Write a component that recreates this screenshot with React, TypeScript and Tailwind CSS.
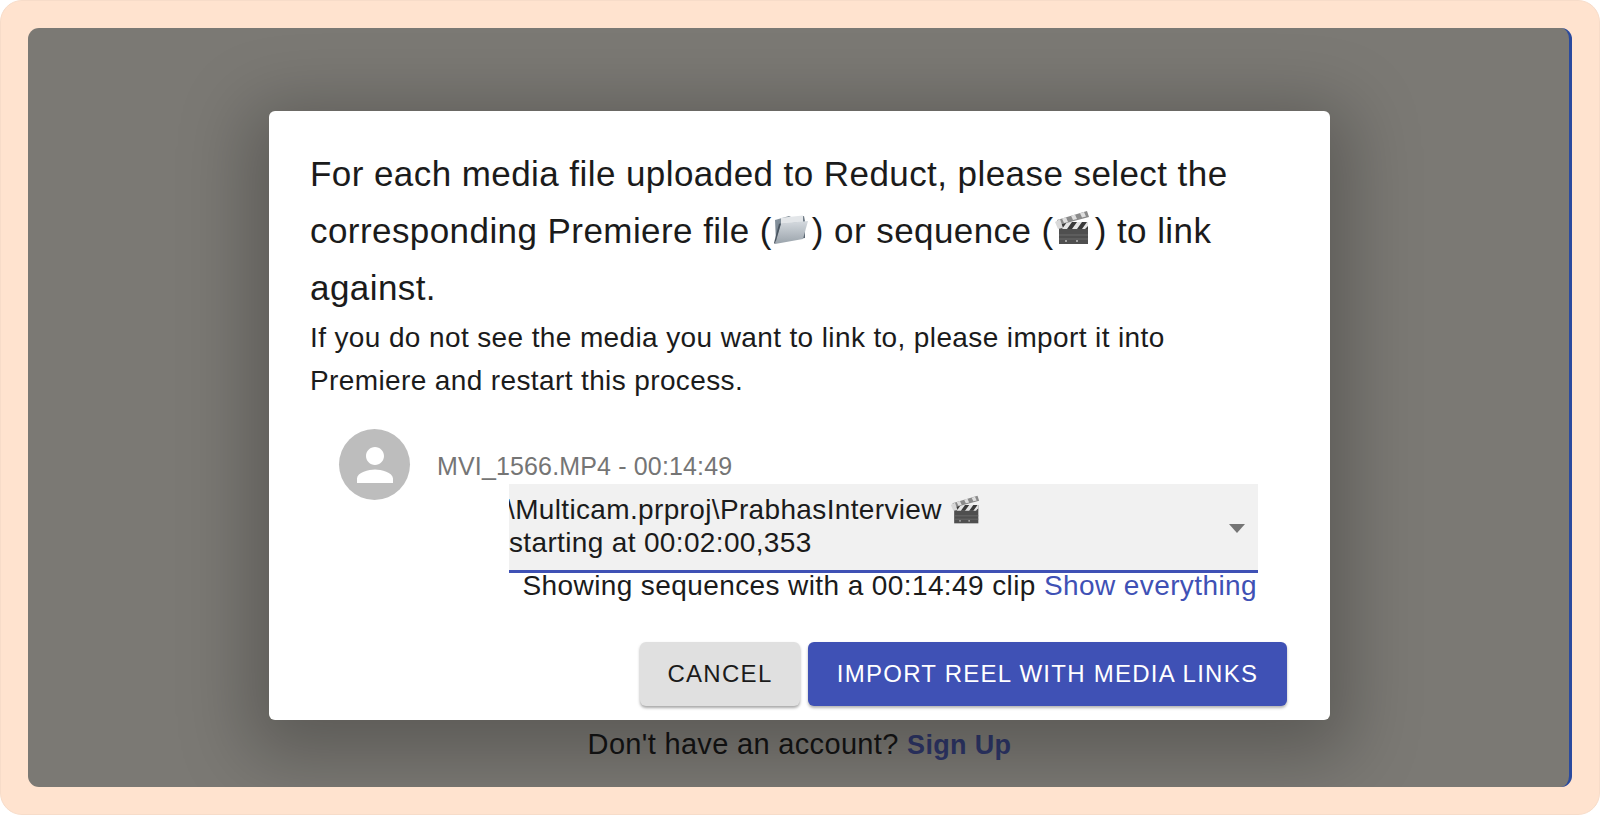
const Folder = () => (
  <svg viewBox="0 0 36 32" className="inline-block w-[36px] h-[32px] align-[-2px] ml-[0px] mr-[4px]">
    <defs>
      <linearGradient id="fa" x1="0" y1="0" x2="1" y2="1">
        <stop offset="0" stopColor="#8b98a3" />
        <stop offset="1" stopColor="#55606b" />
      </linearGradient>
      <linearGradient id="fb" x1="0" y1="0" x2="0" y2="1">
        <stop offset="0" stopColor="#d5dadf" />
        <stop offset="1" stopColor="#9aa3ab" />
      </linearGradient>
    </defs>
    <path d="M3 7 L17 3 L21 5 L32 3 L33 8 L33 25 L4 29 Z" fill="url(#fa)" />
    <path d="M9 4.8 L31 2.5 L31 9 L9 11 Z" fill="#e3e6e9" />
    <path d="M9 10.5 L36 8 L31 26 L3 31 Z" fill="url(#fb)" />
    <path d="M9 10.5 L3 31 L2 30 L7 10.8 Z" fill="#4a5560" />
  </svg>
);

const Clapper = ({ size = 36, cls = "align-[-6px]" }: { size?: number; cls?: string }) => (
  <svg viewBox="0 0 36 36" width={size} height={size} className={"inline-block " + cls}>
    <path d="M5 19 H34 V34 H5 Z" fill="#4f4f4f" />
    <path d="M5 25 H34 M5 29 H34" stroke="#6d6d6d" strokeWidth="1" />
    <path d="M11 31 H13 M22 31 H24" stroke="#bbb" strokeWidth="1.5" />
    <path d="M5 12 H34 V19 H5 Z" fill="#3a3a3a" />
    <path d="M8 19 L13 12 H18 L13 19 Z M18 19 L23 12 H28 L23 19 Z M28 19 L33 12 H34 V16 L31 19 Z" fill="#e4e4e4" />
    <path d="M3 10 L33 1 L35 7 L5 15 Z" fill="#8a8a8a" />
    <path d="M8 8.5 L12 7.3 L14 12 L10 13 Z M17 5.8 L21 4.6 L23 9 L19 10 Z M26 3.2 L30 2 L32 6.5 L28 7.5 Z" fill="#dedede" />
    <path d="M1 12 L6 9 L9 18 L4 19 Z" fill="#d9d9d9" />
  </svg>
);

export default function App() {
  return (
    <div className="w-full h-[815px] bg-white font-['Liberation_Sans',Arial,sans-serif] text-[#1b1b1b]">
      <div className="h-full rounded-[22px] bg-[#ffe3cf] border border-[#f7dcc9] pt-[27px] pl-[27px] pr-[27px] pb-[27px]">
        <div className="h-[759px] rounded-[11px] bg-[#7b7974] border-r-[3px] border-r-[#2a4a9e] flex flex-col items-center pt-[83px] pl-[2px] overflow-hidden">
          <div className="w-[1061px] h-[609px] shrink-0 bg-white rounded-[6px] shadow-[0_16px_70px_20px_rgba(0,0,0,0.25)] pt-[34px] pl-[41px] pr-[41px] relative">
            <p className="text-[35px] leading-[57px] tracking-[0.43px]">
              For each media file uploaded to Reduct, please select the corresponding Premiere file (<Folder />) or sequence (<span className="mr-[5px]"><Clapper cls="align-[-3px]" /></span>) to link against.
            </p>
            <p className="text-[28px] leading-[43px] tracking-[0.38px] w-[900px]">
              If you do not see the media you want to link to, please import it into Premiere and restart this process.
            </p>
            <div className="flex mt-[27px] ml-[29px]">
              <div className="w-[71px] h-[71px] rounded-full bg-[#bdbdbd] flex items-center justify-center shrink-0">
                <svg viewBox="0 0 24 24" className="w-[54px] h-[54px]" fill="#fff">
                  <path d="M12 12c2.21 0 4-1.79 4-4s-1.79-4-4-4-4 1.79-4 4 1.79 4 4 4zm0 2c-2.67 0-8 1.34-8 4v2h16v-2c0-2.66-5.33-4-8-4z" />
                </svg>
              </div>
              <div className="ml-[27px] flex-1 min-w-0">
                <div className="text-[25px] leading-[28px] tracking-[0.15px] text-[#757575] mt-[23px]">MVI_1566.MP4 - 00:14:49</div>
                <div className="ml-[72px] w-[749px] mt-[4px]">
                  <div className="h-[89px] bg-[#f1f1f1] border-b-[3px] border-b-[#3f51b5] flex items-center relative overflow-hidden">
                    <div className="text-[28px] leading-[33px] tracking-[0.35px] whitespace-nowrap -ml-[2px] pb-[2px]">
                      <div>\Multicam.prproj\PrabhasInterview <Clapper size={30} /></div>
                      <div className="pl-[2px]">starting at 00:02:00,353</div>
                    </div>
                    <svg viewBox="0 0 16 9" className="absolute right-[13px] top-[40px] w-[16px] h-[9px]" fill="#757575">
                      <path d="M0 0 H16 L8 9 Z" />
                    </svg>
                  </div>
                  <div className="text-[28px] leading-[28px] tracking-[0.4px] text-right whitespace-nowrap -mt-[1px] pr-[1px]">
                    Showing sequences with a 00:14:49 clip <span className="text-[#3f51b5]">Show everything</span>
                  </div>
                </div>
              </div>
            </div>
            <div className="flex justify-end gap-[8px] absolute bottom-[14px] right-[43px]">
              <button className="w-[160px] h-[64px] rounded-[6px] bg-[#e0e0e0] text-[24px] tracking-[1.3px] shadow-[0_2px_3px_rgba(0,0,0,0.35)]">CANCEL</button>
              <button className="w-[479px] h-[64px] rounded-[6px] bg-[#3f51b5] text-white text-[24px] tracking-[1.25px] shadow-[0_2px_3px_rgba(0,0,0,0.3)]">IMPORT REEL WITH MEDIA LINKS</button>
            </div>
          </div>
          <div className="mt-[7px] text-[29px] leading-[34px] tracking-[0.33px] text-[#141414]">
            Don't have an account? <span className="font-bold text-[27px] text-[#2e3668]">Sign Up</span>
          </div>
        </div>
      </div>
    </div>
  );
}
